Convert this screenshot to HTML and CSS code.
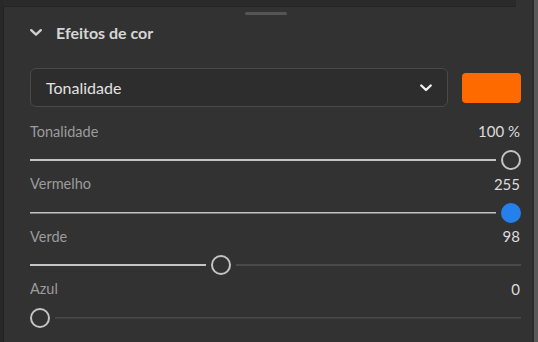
FILE: index.html
```html
<!DOCTYPE html>
<html lang="pt">
<head>
    <meta charset="UTF-8">
    <meta name="viewport" content="width=device-width, initial-scale=1.0">
    <title>Efeitos de cor</title>
    <link rel="stylesheet" href="styles.css">
</head>
<body>
    <div class="window">
        <div class="panel">
            <div class="topbar"></div>
            <div class="handle"></div>

            <div class="section-head">
                <svg class="chevron" width="12" height="7" viewBox="0 0 12 7">
                    <path d="M1.2 1.2 L6 5.6 L10.8 1.2" fill="none" stroke="currentColor" stroke-width="2.4" stroke-linecap="round" stroke-linejoin="round"/>
                </svg>
                <span>Efeitos de cor</span>
            </div>

            <div class="picker-row">
                <div class="select">
                    <span>Tonalidade</span>
                    <svg width="12" height="8" viewBox="0 0 12 8">
                        <path d="M1.3 1.5 L6 6 L10.7 1.5" fill="none" stroke="currentColor" stroke-width="2.4" stroke-linecap="round" stroke-linejoin="round"/>
                    </svg>
                </div>
                <div class="swatch"></div>
            </div>

            <div class="sliders">
                <div class="row">
                    <div class="row-head"><span class="label">Tonalidade</span><span class="value">100 %</span></div>
                    <div class="slider" style="--p: 1">
                        <div class="fill"></div><div class="thumb"></div><div class="rest"></div>
                    </div>
                </div>
                <div class="row">
                    <div class="row-head"><span class="label">Vermelho</span><span class="value">255</span></div>
                    <div class="slider" style="--p: 1">
                        <div class="fill"></div><div class="thumb active"></div><div class="rest"></div>
                    </div>
                </div>
                <div class="row">
                    <div class="row-head"><span class="label">Verde</span><span class="value">98</span></div>
                    <div class="slider" style="--p: 0.3843">
                        <div class="fill"></div><div class="thumb"></div><div class="rest"></div>
                    </div>
                </div>
                <div class="row">
                    <div class="row-head"><span class="label">Azul</span><span class="value">0</span></div>
                    <div class="slider" style="--p: 0">
                        <div class="fill"></div><div class="thumb"></div><div class="rest"></div>
                    </div>
                </div>
            </div>
        </div>
        <div class="edge"></div>
    </div>
</body>
</html>
```

FILE: styles.css
```css
/* Panel colours */
:root {
    --bg: #323232;
    --bg-dark: #2a2a2a;
    --text: #dcdcdc;
    --muted: #9c9c9c;
    --track: #c4c4c4;
    --track-off: #4a4a4a;
    --accent: #2680eb;
    --swatch: #ff6a00;
}

* {
    box-sizing: border-box;
}

body {
    margin: 0;
    background: var(--bg);
    font-family: Lato, "Noto Sans", sans-serif;
    color: var(--text);
}

.window {
    display: flex;
    width: 538px;
    height: 342px;
    overflow: hidden;
    background: var(--bg);
}

.panel {
    flex: 1;
    border-left: 3px solid #282828;
    box-shadow: inset 1px 0 0 #222;
    padding: 0 11px 0 27px;
}

.edge {
    width: 6px;
    border-left: 2px solid #2b2b2b;
    background: #585858;
}

.topbar {
    height: 7px;
    margin: 0 5px 0 -27px;
    background: var(--bg-dark);
    border-bottom: 1px solid #242424;
}

.handle {
    width: 42px;
    height: 3px;
    margin: 5px auto 0 215px;
    background: #555;
    border-radius: 2px;
}

.section-head {
    display: flex;
    align-items: center;
    gap: 14px;
    height: 26px;
    margin-top: 4px;
    font-size: 16px;
    font-weight: 700;
    color: #d6d6d6;
}

.chevron {
    color: #cfcfcf;
}

.picker-row {
    display: flex;
    align-items: center;
    gap: 14px;
    margin-top: 23px;
}

.select {
    flex: 1;
    display: flex;
    align-items: center;
    justify-content: space-between;
    height: 39px;
    padding: 0 15px 0 15px;
    background: #2d2d2d;
    border: 1px solid #4a4a4a;
    border-radius: 6px;
    font-size: 16px;
    color: #e2e2e2;
}

.select svg {
    color: #f0f0f0;
}

.swatch {
    width: 59px;
    height: 30px;
    background: var(--swatch);
    border-radius: 4px;
}

.sliders {
    display: flex;
    flex-direction: column;
    gap: 2.5px;
    margin-top: 13px;
}

.row-head {
    display: flex;
    justify-content: space-between;
    align-items: center;
    height: 22px;
    font-size: 14.5px;
}

.label {
    color: var(--muted);
}

.value {
    color: var(--text);
    font-size: 15px;
    margin-right: 1px;
}

.slider {
    display: flex;
    align-items: center;
    height: 20px;
    margin-top: 8px;
}

.fill {
    width: calc(var(--p) * (100% - 20px));
    height: 2px;
    background: var(--track);
    clip-path: inset(0 5px 0 0);
}

.rest {
    flex: 1;
    height: 2px;
    background: var(--track-off);
    clip-path: inset(0 0 0 5px);
}

.thumb {
    width: 20px;
    height: 20px;
    flex-shrink: 0;
    border-radius: 50%;
    border: 2px solid var(--track);
    background: var(--bg);
}

.thumb.active {
    border-color: var(--accent);
    background: var(--accent);
}
```
